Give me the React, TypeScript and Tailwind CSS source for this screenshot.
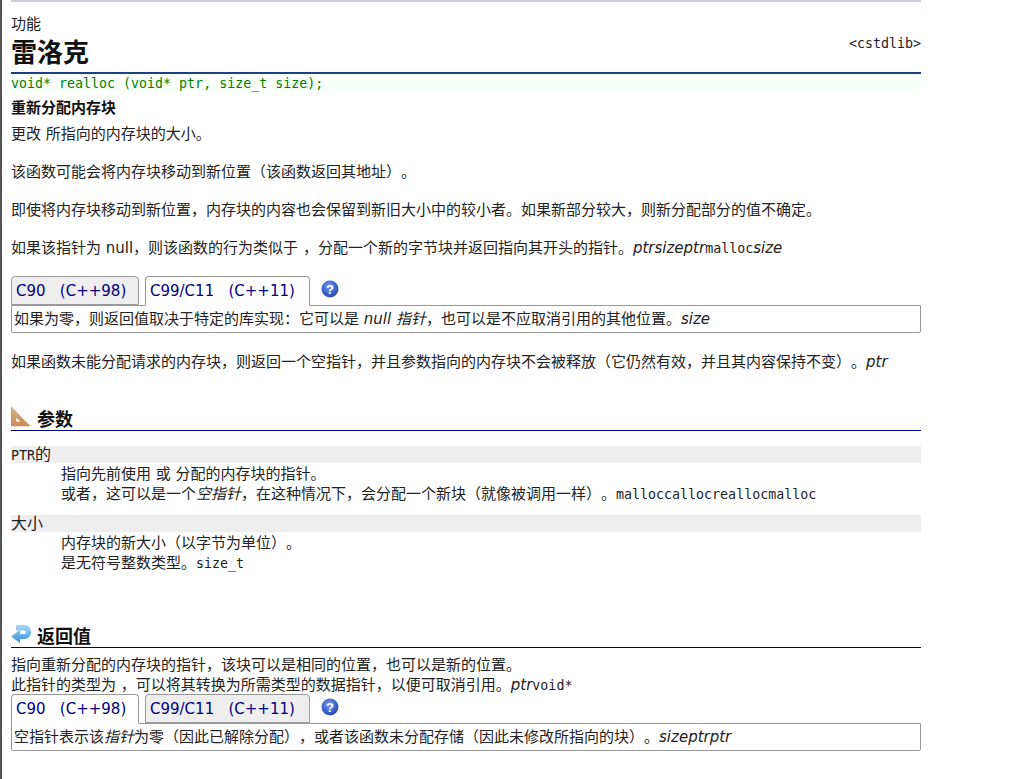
const sans = "font-['DejaVu_Sans','Noto_Sans_CJK_SC',sans-serif]";
const mono = "font-['DejaVu_Sans_Mono','Noto_Sans_CJK_SC',monospace] text-[13.3px]";

function Mono({ children }: { children: React.ReactNode }) {
  return <code className={mono}>{children}</code>;
}

function HelpIcon() {
  return (
    <svg width="18" height="18" viewBox="0 0 18 18" className="ml-[11px] mt-[4px]">
      <defs>
        <radialGradient id="help" cx="45%" cy="35%" r="70%">
          <stop offset="0%" stopColor="#7f9df0" />
          <stop offset="60%" stopColor="#3a62cc" />
          <stop offset="100%" stopColor="#2a479f" />
        </radialGradient>
      </defs>
      <circle cx="9" cy="9" r="8.5" fill="url(#help)" />
      <text x="9" y="13.5" textAnchor="middle" fontSize="13" fontWeight="700" fill="#fff" fontFamily="Liberation Sans">?</text>
    </svg>
  );
}

function Tabs({ active }: { active: number }) {
  const tabs = ["C90\u00a0\u00a0\u00a0(C++98)", "C99/C11\u00a0\u00a0\u00a0(C++11)"];
  const widths = ["w-[128px]", "w-[165px]"];
  return (
    <div className="flex items-start h-[29px] relative z-10">
      {tabs.map((t, i) => (
        <div
          key={t}
          className={`${widths[i]} ${i === 1 ? "ml-[6px]" : ""} pl-[4px] pt-[4px] border border-[#999] rounded-t-[4px] text-[15px] leading-[20px] text-[#000080] font-['DejaVu_Sans',sans-serif] whitespace-pre ${
            i === active ? "bg-white border-b-white h-[30px]" : "bg-[#eeeeee] h-[29px]"
          }`}
        >
          {t}
        </div>
      ))}
      <HelpIcon />
    </div>
  );
}

function TabBody({ children }: { children: React.ReactNode }) {
  return (
    <div className="h-[28px] border border-[#999] rounded-b-[2px] pl-[2px] leading-[27px] text-[15px] text-[#222]">
      {children}
    </div>
  );
}

function SectionTitle({ icon, children, className }: { icon: React.ReactNode; children: React.ReactNode; className: string }) {
  return (
    <h3 className={`flex items-end gap-[6px] border-b border-[#000080] font-bold text-[18px] text-[#111] ${className}`}>
      {icon}
      <span className="leading-[21px]">{children}</span>
    </h3>
  );
}

function ParamName({ children }: { children: React.ReactNode }) {
  return <div className={`h-[17px] bg-[#eeeeee] leading-[17px] text-[#222] ${mono}`}>{children}</div>;
}

export default function App() {
  return (
    <div className={`${sans} [text-spacing-trim:space-all] min-h-[779px] bg-white border-l-2 border-l-[#555] pl-[9px] text-[15px] text-[#222]`}>
      <div className="w-[910px]">
        <div className="h-[2px] bg-[#ccccdd]" />

        <div className="mt-[13px] h-[18px] leading-[18px]">功能</div>

        <div className="flex items-end justify-between border-b-2 border-b-[#1f3f7f] h-[41px]">
          <h1 className="text-[26px] font-bold leading-[38px] text-[#111]">雷洛克</h1>
          <div className={`mb-[20px] leading-[16px] text-[#222] ${mono}`}>&lt;cstdlib&gt;</div>
        </div>

        <div className={`h-[17px] bg-[#f8fff8] text-[#008000] leading-[19px] ${mono}`}>
          void* realloc (void* ptr, size_t size);
        </div>

        <div className="mt-[8px] h-[18px] leading-[18px] font-bold text-[#111]">重新分配内存块</div>

        <p className="mt-[8px] leading-[18px]">更改 所指向的内存块的大小。</p>
        <p className="mt-[20px] leading-[18px]">该函数可能会将内存块移动到新位置（该函数返回其地址）。</p>
        <p className="mt-[20px] leading-[18px]">即使将内存块移动到新位置，内存块的内容也会保留到新旧大小中的较小者。如果新部分较大，则新分配部分的值不确定。</p>
        <p className="mt-[20px] leading-[18px]">
          如果该指针为 null，则该函数的行为类似于 ，分配一个新的字节块并返回指向其开头的指针。<i>ptrsizeptr</i><Mono>malloc</Mono><i>size</i>
        </p>

        <div className="mt-[18px]">
          <Tabs active={1} />
          <TabBody>
            如果为零，则返回值取决于特定的库实现：它可以是 <i>null 指针</i>，也可以是不应取消引用的其他位置。<i>size</i>
          </TabBody>
        </div>

        <p className="mt-[20px] leading-[18px]">
          如果函数未能分配请求的内存块，则返回一个空指针，并且参数指向的内存块不会被释放（它仍然有效，并且其内容保持不变）。<i>ptr</i>
        </p>

        <SectionTitle
          className="mt-[36px]"
          icon={
            <svg width="20" height="20" viewBox="0 0 20 20" className="mb-[3px]">
              <defs>
                <linearGradient id="sq" x1="0" y1="0" x2="0" y2="1">
                  <stop offset="0%" stopColor="#dcae80" />
                  <stop offset="100%" stopColor="#c98f5a" />
                </linearGradient>
              </defs>
              <path fillRule="evenodd" d="M0 0 L19 19 L0 19 Z M5 10 L5 15 L10 15 Z" fill="url(#sq)" stroke="#b8824f" strokeWidth="0.5" />
            </svg>
          }
        >
          参数
        </SectionTitle>

        <div className="mt-[15px]">
          <ParamName>PTR<span className="text-[16px]">的</span></ParamName>
          <div className="mt-[1px] pl-[50px] leading-[20px]">
            <div>指向先前使用 或 分配的内存块的指针。</div>
            <div>或者，这可以是一个<i>空指针</i>，在这种情况下，会分配一个新块（就像被调用一样）。<Mono>malloccallocreallocmalloc</Mono></div>
          </div>
        </div>

        <div className="mt-[10px]">
          <ParamName><span className="text-[16px]">大小</span></ParamName>
          <div className="mt-[1px] pl-[50px] leading-[20px]">
            <div>内存块的新大小（以字节为单位）。</div>
            <div>是无符号整数类型。<Mono>size_t</Mono></div>
          </div>
        </div>

        <SectionTitle
          className="mt-[50px]"
          icon={
            <svg width="20" height="20" viewBox="0 0 20 20" className="mb-[3px]">
              <defs>
                <linearGradient id="ret" x1="0" y1="0" x2="0" y2="1">
                  <stop offset="0%" stopColor="#a8d8f8" />
                  <stop offset="100%" stopColor="#2f8fdc" />
                </linearGradient>
              </defs>
              <path d="M5 1 H13 C17.5 1 20 4 20 8 C20 12 17.5 15 13 15 H9 V19 L0 12.5 L9 6 V10 H13 C14.5 10 15 9 15 8 C15 7 14.5 6.5 13 6.5 H5 Z" fill="url(#ret)" />
            </svg>
          }
        >
          返回值
        </SectionTitle>

        <div className="mt-[7px] leading-[20px]">
          <div>指向重新分配的内存块的指针，该块可以是相同的位置，也可以是新的位置。</div>
          <div className="h-[19px]">此指针的类型为 ，可以将其转换为所需类型的数据指针，以便可取消引用。<i>ptr</i><Mono>void*</Mono></div>
        </div>

        <div>
          <Tabs active={0} />
          <TabBody>
            空指针表示该<i>指针</i>为零（因此已解除分配），或者该函数未分配存储（因此未修改所指向的块）。<i>sizeptrptr</i>
          </TabBody>
        </div>
      </div>
    </div>
  );
}
